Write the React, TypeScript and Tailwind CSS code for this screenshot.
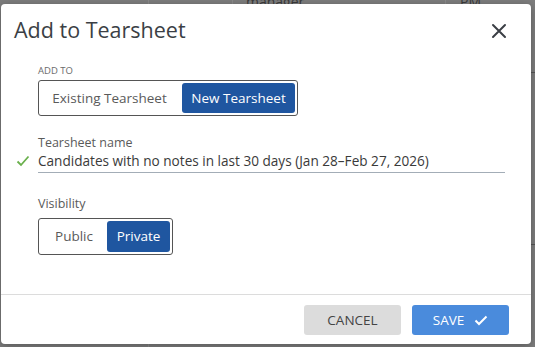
import React from "react";

export default function App() {
  const font = { fontFamily: '"Open Sans", "Noto Sans", sans-serif' };
  return (
    <div className="relative w-[535px] h-[347px] overflow-hidden bg-[#7d7d7d]" style={font}>
      {/* background page hints */}
      <div className="absolute left-[148px] top-0 h-[347px] w-px bg-[#8a8a8a]" />
      <div className="absolute left-[232px] top-0 h-[12px] w-px bg-[#8a8a8a]" />
      <div className="absolute left-[445px] top-0 h-[12px] w-px bg-[#8a8a8a]" />
      <div className="absolute left-[246px] top-[-9px] text-[14px] text-[#3a3a3a]">manager</div>
      <div className="absolute left-[460px] top-[-9px] text-[14px] text-[#3a3a3a]">PM</div>
      <div className="absolute left-[531px] top-[72px] h-px w-[4px] bg-[#555]" />
      <div className="absolute left-[531px] top-[244px] h-px w-[4px] bg-[#555]" />

      {/* dialog */}
      <div className="absolute left-[1px] top-[4px] w-[530px] h-[340px] bg-white rounded-[4px] shadow-[0_2px_8px_rgba(0,0,0,0.3)] flex flex-col">
        <div className="h-[52px] flex items-center justify-between pl-[13px] pr-[24px]">
          <div className="text-[21.5px] text-[#3b3f45] tracking-[0px]">Add to Tearsheet</div>
          <svg width="16" height="16" viewBox="0 0 16 16" className="mt-[1px]">
            <path d="M2 2 L14 14 M14 2 L2 14" stroke="#3b3f45" strokeWidth="2" strokeLinecap="round" />
          </svg>
        </div>

        <div className="pl-[37px] pr-[26px] flex flex-col">
          <div className="mt-[9px] text-[9.5px] leading-[12px] text-[#6b6b6b] uppercase">Add to</div>
          <div className="mt-[3px] w-[260px] h-[36px] border border-[#555] rounded-[3px] flex items-center p-[2px]">
            <div className="flex-1 text-center text-[13.5px] text-[#5a5a5a] pr-[4px]">Existing Tearsheet</div>
            <div className="w-[113px] h-[30px] bg-[#1f56a0] rounded-[3px] text-white text-[13.5px] flex items-center justify-center">New Tearsheet</div>
          </div>

          <div className="mt-[19px] text-[12.5px] leading-[16px] text-[#5a5a5a]">Tearsheet name</div>
          <div className="relative h-[22px] border-b border-[#a3adb7] flex items-center">
            <svg width="14" height="12" viewBox="0 0 14 12" className="absolute left-[-22px] top-[4px]">
              <path d="M1.5 6.5 L5 10 L12.5 1.5" stroke="#6ab04c" strokeWidth="1.8" fill="none" />
            </svg>
            <div className="text-[13.6px] text-[#3a3a3a]">Candidates with no notes in last 30 days (Jan 28–Feb 27, 2026)</div>
          </div>

          <div className="mt-[23px] text-[12.5px] leading-[16px] text-[#5a5a5a]">Visibility</div>
          <div className="mt-[6px] w-[135px] h-[37px] border border-[#555] rounded-[3px] flex items-center p-[2px]">
            <div className="flex-1 text-center text-[13.5px] text-[#5a5a5a]">Public</div>
            <div className="w-[63px] h-[31px] bg-[#1f56a0] rounded-[3px] text-white text-[13.5px] flex items-center justify-center">Private</div>
          </div>
        </div>

        <div className="mt-auto border-t border-[#dcdcdc] h-[50px] flex items-start justify-end gap-[11px] pt-[10px] pr-[22px]">
          <div className="w-[97px] h-[30px] rounded-[3px] bg-[#dcdcdc] text-[#444] text-[13.5px] flex items-center justify-center uppercase">Cancel</div>
          <div className="w-[97px] h-[30px] rounded-[3px] bg-[#4a8bdc] text-white text-[13.5px] flex items-center justify-center gap-[10px] uppercase">
            <span>Save</span>
            <svg width="14" height="11" viewBox="0 0 14 11">
              <path d="M1.5 5.5 L5 9 L12.5 1.5" stroke="white" strokeWidth="2" fill="none" />
            </svg>
          </div>
        </div>
      </div>
    </div>
  );
}
